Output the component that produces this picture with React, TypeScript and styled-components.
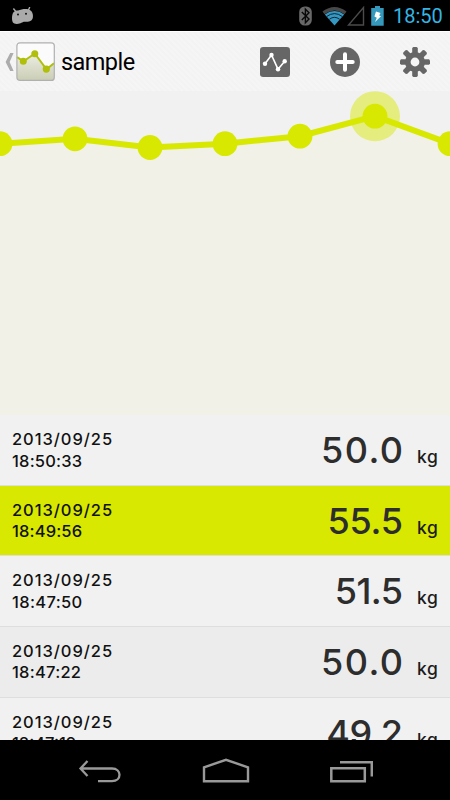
import React from "react";
import styled, { createGlobalStyle } from "styled-components";

const GlobalStyle = createGlobalStyle`
  * { box-sizing: border-box; }
  body { margin: 0; background: #000; }
  svg { display: block; flex: none; }
`;

const Screen = styled.div`
  width: 450px;
  height: 800px;
  display: flex;
  flex-direction: column;
  overflow: hidden;
  background: #000;
  font-family: Inter, sans-serif;
`;

const StatusBar = styled.div`
  flex: none;
  height: 31px;
  display: flex;
  align-items: center;
  justify-content: space-between;
  padding: 0 8px 0 11px;
`;

const StatusIcons = styled.div`
  display: flex;
  align-items: center;
`;

const Glyph = styled.span<{ $after: number }>`
  margin-right: ${(p) => p.$after}px;
`;

const Clock = styled.span`
  width: 49px;
  font: 400 20px/32px Roboto, sans-serif;
  white-space: nowrap;
  color: #33b5e5;
`;

const ActionBar = styled.header`
  flex: none;
  height: 60px;
  display: flex;
  align-items: center;
  padding: 0 20px 0 5px;
  border-top: 1px solid #fff;
  background: repeating-linear-gradient(45deg, #f5f5f5 0 2px, #f3f3f3 2px 4px);
`;

const Title = styled.h1`
  flex: 1;
  margin: 1px 0 0 6px;
  font: 400 23.5px/30px Roboto, sans-serif;
  letter-spacing: -0.55px;
  color: #000;
`;

const Actions = styled.div`
  display: flex;
  gap: 40px;
`;

const ChartPanel = styled.section`
  flex: none;
  height: 324px;
  background: #f1f1f1;
`;

const RecordList = styled.ul`
  flex: none;
  height: 325px;
  margin: 0;
  padding: 0;
  overflow: hidden;
  list-style: none;
  background: #f1f1f1;
`;

const Row = styled.li<{ $tone: string }>`
  height: 70.65px;
  display: flex;
  justify-content: space-between;
  padding: 0 12px;
  border-bottom: 1px solid #dedede;
  background: ${(p) => p.$tone};
`;

const Stamp = styled.div`
  padding-top: 14px;
  font-size: 16.5px;
  font-weight: 500;
  line-height: 21.5px;
  color: #111;
`;

const StampLine = styled.div<{ $spacing: number }>`
  letter-spacing: ${(p) => p.$spacing}px;
  white-space: nowrap;
`;

const Reading = styled.div`
  display: flex;
  align-items: baseline;
  padding-top: 12px;
  line-height: 46px;
`;

const Value = styled.span<{ $spacing: number }>`
  margin-right: ${(p) => -p.$spacing}px;
  font-size: 36px;
  font-weight: 500;
  letter-spacing: ${(p) => p.$spacing}px;
  color: #2d2d2d;
`;

const Unit = styled.span`
  width: 21px;
  margin-left: 14px;
  font-size: 17.5px;
  font-weight: 500;
  letter-spacing: 0.5px;
  color: #1c1c1c;
`;

const NavBar = styled.nav`
  flex: none;
  height: 60px;
  display: flex;
  align-items: center;
  justify-content: space-between;
  padding: 2px 77px 0 78px;
`;

const records = [
  { date: "2013/09/25", time: "18:50:33", value: "50.0", tone: "#f1f1f1", gap: 1.4, timeGap: 0.2 },
  { date: "2013/09/25", time: "18:49:56", value: "55.5", tone: "#d8e800", gap: -0.3, timeGap: 0.15 },
  { date: "2013/09/25", time: "18:47:50", value: "51.5", tone: "#f1f1f1", gap: -0.6, timeGap: 0.35 },
  { date: "2013/09/25", time: "18:47:22", value: "50.0", tone: "#ececec", gap: 1.4, timeGap: 0.25 },
  { date: "2013/09/25", time: "18:47:19", value: "49.2", tone: "#f1f1f1", gap: -0.6, timeGap: 0 },
];

const points = [
  [0, 52.7],
  [75, 47.8],
  [150, 56.5],
  [225, 52.7],
  [300, 45.2],
  [375, 25.2],
  [450, 52.7],
];
const line = points.map((p) => p.join(",")).join(" ");

const Chart = () => (
  <svg width="450" height="324" viewBox="0 0 450 324">
    <polygon points={`${line} 450,324 0,324`} fill="#f1f1e8" />
    <circle cx="375" cy="25.2" r="25" fill="#e4ed7d" />
    <polyline points={line} fill="none" stroke="#d8e800" strokeWidth="6" />
    {points.map(([x, y]) => (
      <circle key={x} cx={x} cy={y} r="12.4" fill="#d8e800" />
    ))}
  </svg>
);

const DroidIcon = () => (
  <svg width="23" height="18" viewBox="0 0 23 18">
    <path d="M2.4 1.5 L6 6 M18.8 0 L16.5 5" stroke="#aaa" strokeWidth="1.4" />
    <path d="M1 11 C1 6 3 3.6 7 3.6 C10 2.2 14 1.6 17 2.2 C21 3 22.6 7 21.8 11 C20.4 15 17 14.8 14 14.8 C11 14.8 10 16.8 6 16.9 C2 17 1 15 1 11Z" fill="#aaa" />
    <circle cx="7" cy="7.6" r="1" fill="#111" />
    <circle cx="15" cy="6.8" r="1" fill="#111" />
  </svg>
);

const BluetoothIcon = () => (
  <svg width="13" height="20" viewBox="0 0 13 20">
    <rect x="0.2" y="0.5" width="12.6" height="19" rx="5.4" fill="#686868" />
    <path d="M2.8 6 L10 13 L6.4 16.8 V3.2 L10 6.8 L2.8 14" fill="none" stroke="#080808" strokeWidth="1.4" />
  </svg>
);

const WifiIcon = () => (
  <svg width="25" height="20" viewBox="0 0 25 20">
    <path d="M0.5 5.6 Q12.5 -3.5 24.5 5.6 L22.5 8.2 Q12.5 0.8 2.5 8.2Z" fill="#484848" />
    <path d="M2.8 8.4 Q12.5 1.5 22.2 8.4 L12.5 19.6Z" fill="#3598c2" />
    <path d="M4.7 10.5 Q12.5 4.7 20.3 10.5 M7.3 13.3 Q12.5 9.3 17.7 13.3" fill="none" stroke="#071a22" strokeWidth="0.9" />
  </svg>
);

const SignalIcon = () => (
  <svg width="18" height="20" viewBox="0 0 18 20">
    <path d="M1.5 19 H16.5 V1.5Z" fill="none" stroke="#4b4b4b" strokeWidth="1.4" />
  </svg>
);

const BatteryIcon = () => (
  <svg width="13" height="20" viewBox="0 0 13 20">
    <path d="M4 0 H9 V2 H12.7 V19.8 H0.2 V2 H4Z" fill="#3598bd" />
    <path d="M5 5.5 L9.5 7 L8.2 9.4 L10 10.3 L4 16 L5.8 11.7 L3.4 10.4Z" fill="#fff" />
  </svg>
);

const UpIcon = () => (
  <svg width="9" height="20" viewBox="0 0 9 20">
    <path d="M5.2 1 H8.6 L4.6 10 L8.6 19 H5.2 L0.6 10Z" fill="#acacac" />
  </svg>
);

const AppIcon = () => (
  <svg width="41" height="40" viewBox="0 0 41 40">
    <defs>
      <linearGradient id="appShade" x1="0" y1="0" x2="0" y2="1">
        <stop offset="0" stopColor="#ecede3" />
        <stop offset="1" stopColor="#cbceb5" />
      </linearGradient>
    </defs>
    <rect x="3" y="0.8" width="37.3" height="37.6" rx="3" fill="#fbfbfb" />
    <path d="M3 15.1 L9.5 19.3 L20.8 11.5 L32.5 27.3 L40 21.2 V38 H3Z" fill="url(#appShade)" />
    <path d="M3 15.1 L9.5 19.3 L20.8 11.5 L32.5 27.3 L40 21.2" fill="none" stroke="#b0bf0b" strokeWidth="2" />
    <circle cx="9.3" cy="19.3" r="3.5" fill="#b0bf0b" />
    <circle cx="20.8" cy="11.7" r="3.5" fill="#b0bf0b" />
    <circle cx="32.3" cy="27.1" r="3.6" fill="#b0bf0b" />
    <rect x="2.9" y="0.8" width="37.4" height="37.6" rx="3" fill="none" stroke="#b0b0b0" strokeWidth="1.2" />
  </svg>
);

const GraphIcon = () => (
  <svg width="30" height="30" viewBox="0 0 30 30">
    <rect width="30" height="30" rx="3.2" fill="#666" />
    <path d="M5 16.8 L11.5 8 L18 22.2 L24.7 14.2" fill="none" stroke="#fff" strokeWidth="1.6" />
    {[[5, 16.8], [11.5, 8], [18, 22.2], [24.7, 14.2]].map(([x, y]) => (
      <circle key={x} cx={x} cy={y} r="2.2" fill="#fff" />
    ))}
  </svg>
);

const AddIcon = () => (
  <svg width="30" height="30" viewBox="0 0 30 30">
    <circle cx="15" cy="15" r="15" fill="#666" />
    <path d="M15 7.3 V22.7 M7.3 15 H22.7" stroke="#fff" strokeWidth="4" strokeLinecap="round" />
  </svg>
);

const GearIcon = () => (
  <svg width="30" height="30" viewBox="0 0 30 30">
    {[0, 45, 90, 135].map((a) => (
      <path key={a} d="M13.4 0 H16.6 L17.8 1 V29 L16.6 30 H13.4 L12.2 29 V1Z" transform={`rotate(${a} 15 15)`} fill="#666" />
    ))}
    <circle cx="15" cy="15" r="10" fill="#666" />
    <circle cx="15" cy="15" r="4.4" fill="#f5f5f5" />
  </svg>
);

const BackIcon = () => (
  <svg width="44" height="26" viewBox="0 0 44 26">
    <path d="M9.5 3 L2.5 10.5 L9.5 18 M3 10.5 H34 C44 10.5 44 23.2 34 23.2 H20" fill="none" stroke="#999" strokeWidth="2.3" />
  </svg>
);

const HomeIcon = () => (
  <svg width="48" height="26" viewBox="0 0 48 26">
    <path d="M2 23.2 V9.3 L24 1.8 L46 9.3 V23.2Z" fill="none" stroke="#999" strokeWidth="2.4" />
  </svg>
);

const RecentIcon = () => (
  <svg width="44" height="26" viewBox="0 0 44 26">
    <path d="M2.3 10.3 H35.8 V23.2 H2.3Z M11 4.2 H42.8 V18.5" fill="none" stroke="#999" strokeWidth="2.5" />
  </svg>
);

export default function App() {
  return (
    <Screen>
      <GlobalStyle />
      <StatusBar>
        <DroidIcon />
        <StatusIcons>
          <Glyph $after={10}><BluetoothIcon /></Glyph>
          <Glyph $after={0}><WifiIcon /></Glyph>
          <Glyph $after={6}><SignalIcon /></Glyph>
          <Glyph $after={9}><BatteryIcon /></Glyph>
          <Clock>18:50</Clock>
        </StatusIcons>
      </StatusBar>
      <ActionBar>
        <UpIcon />
        <AppIcon />
        <Title>sample</Title>
        <Actions>
          <GraphIcon />
          <AddIcon />
          <GearIcon />
        </Actions>
      </ActionBar>
      <ChartPanel>
        <Chart />
      </ChartPanel>
      <RecordList>
        {records.map((r) => (
          <Row key={r.time} $tone={r.tone}>
            <Stamp>
              <StampLine $spacing={0.95}>{r.date}</StampLine>
              <StampLine $spacing={r.timeGap}>{r.time}</StampLine>
            </Stamp>
            <Reading>
              <Value $spacing={r.gap}>{r.value}</Value>
              <Unit>kg</Unit>
            </Reading>
          </Row>
        ))}
      </RecordList>
      <NavBar>
        <BackIcon />
        <HomeIcon />
        <RecentIcon />
      </NavBar>
    </Screen>
  );
}
